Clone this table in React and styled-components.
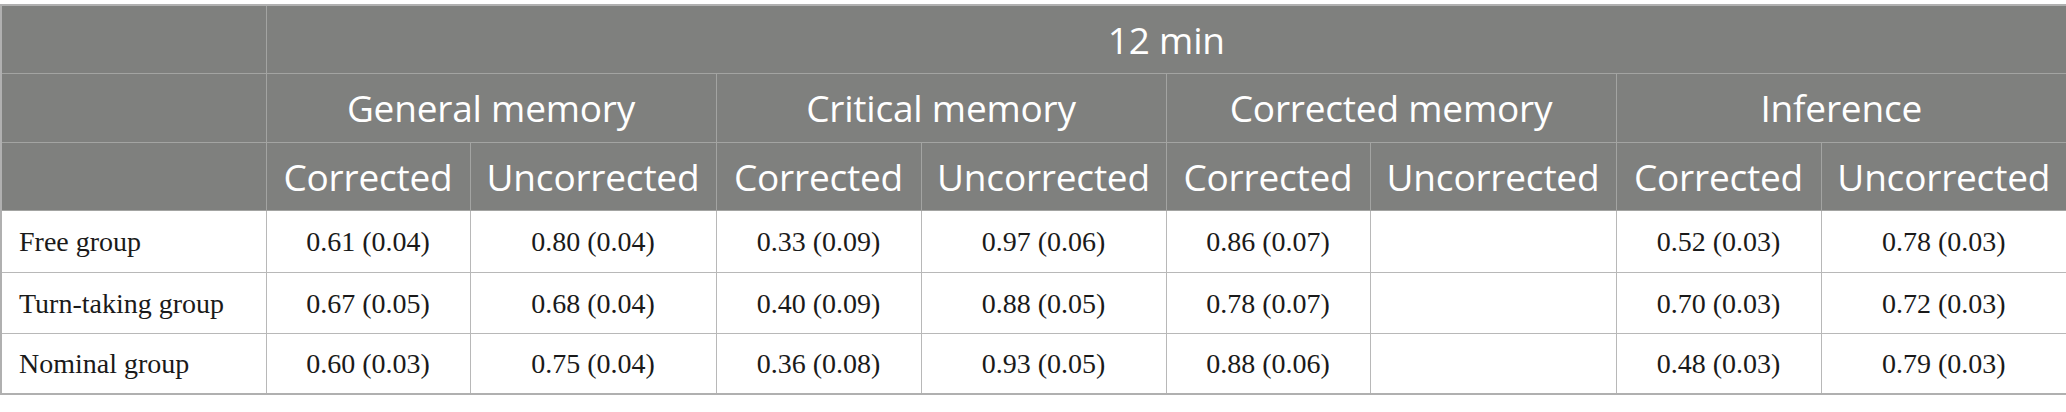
import React from "react";
import styled, { createGlobalStyle } from "styled-components";

const GlobalStyle = createGlobalStyle`
    body {
        margin: 0;
        padding-top: 4px;
        background: #ffffff;
    }
`;

const Table = styled.table`
    width: 2066px;
    table-layout: fixed;
    border-collapse: collapse;
    border: 2px solid #b0b0b0;
`;

const HeadRow = styled.tr`
    height: ${(props) => props.$height}px;
    background-color: #7f807e;
`;

const HeadCell = styled.th`
    border: 1px solid #a3a4a2;
    color: #ffffff;
    font-family: "Open Sans", "Noto Sans", sans-serif;
    font-weight: 400;
    font-size: 37px;
    letter-spacing: -0.2px;
    text-align: center;
    padding: 0;
    white-space: nowrap;
`;

const BodyRow = styled.tr`
    height: ${(props) => props.$height}px;
`;

const LabelCell = styled.td`
    border: 1px solid #b8b8b8;
    font-family: "Liberation Serif", "Times New Roman", serif;
    font-size: 28px;
    color: #1a1a1a;
    text-align: left;
    padding: 2px 0 0 17px;
    white-space: nowrap;
`;

const ValueCell = styled(LabelCell)`
    text-align: center;
    padding: 2px 0 0 0;
`;

const widths = [265, 204, 246, 205, 245, 204, 246, 205, 246];

const groups = ["General memory", "Critical memory", "Corrected memory", "Inference"];

const rows = [
    {
        label: "Free group",
        values: ["0.61 (0.04)", "0.80 (0.04)", "0.33 (0.09)", "0.97 (0.06)", "0.86 (0.07)", "", "0.52 (0.03)", "0.78 (0.03)"],
        height: 62,
    },
    {
        label: "Turn-taking group",
        values: ["0.67 (0.05)", "0.68 (0.04)", "0.40 (0.09)", "0.88 (0.05)", "0.78 (0.07)", "", "0.70 (0.03)", "0.72 (0.03)"],
        height: 61,
    },
    {
        label: "Nominal group",
        values: ["0.60 (0.03)", "0.75 (0.04)", "0.36 (0.08)", "0.93 (0.05)", "0.88 (0.06)", "", "0.48 (0.03)", "0.79 (0.03)"],
        height: 61,
    },
];

export default function App() {
    return (
        <>
            <GlobalStyle />
            <Table>
                <colgroup>
                    {widths.map((w, i) => (
                        <col key={i} style={{ width: w }} />
                    ))}
                </colgroup>
                <thead>
                    <HeadRow $height={68}>
                        <HeadCell></HeadCell>
                        <HeadCell colSpan={8}>12 min</HeadCell>
                    </HeadRow>
                    <HeadRow $height={69}>
                        <HeadCell></HeadCell>
                        {groups.map((g) => (
                            <HeadCell key={g} colSpan={2}>
                                {g}
                            </HeadCell>
                        ))}
                    </HeadRow>
                    <HeadRow $height={68}>
                        <HeadCell></HeadCell>
                        {groups.map((g) => (
                            <React.Fragment key={g}>
                                <HeadCell>Corrected</HeadCell>
                                <HeadCell>Uncorrected</HeadCell>
                            </React.Fragment>
                        ))}
                    </HeadRow>
                </thead>
                <tbody>
                    {rows.map((row) => (
                        <BodyRow key={row.label} $height={row.height}>
                            <LabelCell>{row.label}</LabelCell>
                            {row.values.map((v, i) => (
                                <ValueCell key={i}>{v}</ValueCell>
                            ))}
                        </BodyRow>
                    ))}
                </tbody>
            </Table>
        </>
    );
}
